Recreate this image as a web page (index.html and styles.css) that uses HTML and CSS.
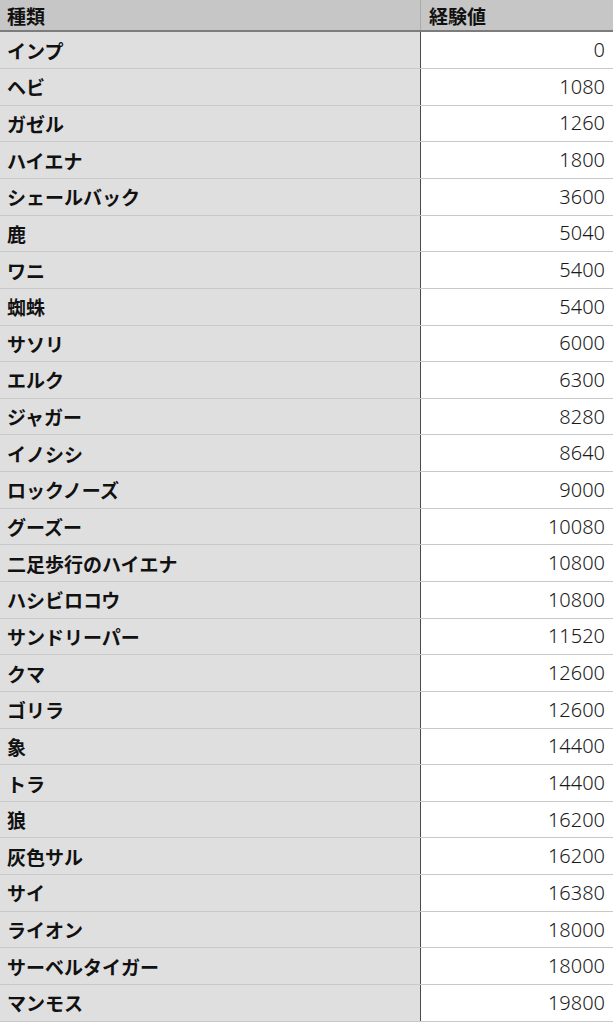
FILE: index.html
```html
<!DOCTYPE html>
<html lang="ja">
<head>
<meta charset="utf-8">
<link rel="stylesheet" href="styles.css">
</head>
<body>
<div class="table">
  <div class="row head"><div class="name">種類</div><div class="val">経験値</div></div>
  <div class="row"><div class="name">インプ</div><div class="val">0</div></div>
  <div class="row"><div class="name">ヘビ</div><div class="val">1080</div></div>
  <div class="row"><div class="name">ガゼル</div><div class="val">1260</div></div>
  <div class="row"><div class="name">ハイエナ</div><div class="val">1800</div></div>
  <div class="row"><div class="name">シェールバック</div><div class="val">3600</div></div>
  <div class="row"><div class="name">鹿</div><div class="val">5040</div></div>
  <div class="row"><div class="name">ワニ</div><div class="val">5400</div></div>
  <div class="row"><div class="name">蜘蛛</div><div class="val">5400</div></div>
  <div class="row"><div class="name">サソリ</div><div class="val">6000</div></div>
  <div class="row"><div class="name">エルク</div><div class="val">6300</div></div>
  <div class="row"><div class="name">ジャガー</div><div class="val">8280</div></div>
  <div class="row"><div class="name">イノシシ</div><div class="val">8640</div></div>
  <div class="row"><div class="name">ロックノーズ</div><div class="val">9000</div></div>
  <div class="row"><div class="name">グーズー</div><div class="val">10080</div></div>
  <div class="row"><div class="name">二足歩行のハイエナ</div><div class="val">10800</div></div>
  <div class="row"><div class="name">ハシビロコウ</div><div class="val">10800</div></div>
  <div class="row"><div class="name">サンドリーパー</div><div class="val">11520</div></div>
  <div class="row"><div class="name">クマ</div><div class="val">12600</div></div>
  <div class="row"><div class="name">ゴリラ</div><div class="val">12600</div></div>
  <div class="row"><div class="name">象</div><div class="val">14400</div></div>
  <div class="row"><div class="name">トラ</div><div class="val">14400</div></div>
  <div class="row"><div class="name">狼</div><div class="val">16200</div></div>
  <div class="row"><div class="name">灰色サル</div><div class="val">16200</div></div>
  <div class="row"><div class="name">サイ</div><div class="val">16380</div></div>
  <div class="row"><div class="name">ライオン</div><div class="val">18000</div></div>
  <div class="row"><div class="name">サーベルタイガー</div><div class="val">18000</div></div>
  <div class="row"><div class="name">マンモス</div><div class="val">19800</div></div>
</div>
</body>
</html>
```

FILE: styles.css
```css
html, body {
  margin: 0;
  padding: 0;
  background: #ffffff;
}
body {
  font-family: "Noto Sans CJK JP", "Noto Sans", sans-serif;
  color: #111111;
  font-size: 19px;
}
.table {
  display: flex;
  flex-direction: column;
  width: 613px;
}
.row {
  display: grid;
  grid-template-columns: 420px 1fr;
  height: 36.65px;
  box-sizing: border-box;
  border-bottom: 1px solid #c9c9c9;
}
.row.head {
  height: 32.4px;
  background: #c5c6c5;
  border-bottom: 2px solid #7c7c7c;
}
.name {
  background: #dfdfdf;
  padding-left: 7px;
  font-weight: 700;
  display: flex;
  align-items: center;
  line-height: 1;
}
.val {
  background: #ffffff;
  border-left: 1px solid #4a4a4a;
  padding-right: 8px;
  display: flex;
  align-items: center;
  justify-content: flex-end;
  font-family: "Noto Sans", "Noto Sans CJK JP", sans-serif;
  font-size: 20px;
  font-weight: 300;
  color: #1a1a1a;
  line-height: 1;
}
.head .name {
  background: #c5c6c5;
}
.head .val {
  background: #c5c6c5;
  border-left: 1px solid #a9aaa9;
  justify-content: flex-start;
  padding-left: 8px;
  font-family: "Noto Sans CJK JP", "Noto Sans", sans-serif;
  font-size: 19px;
  font-weight: 700;
  color: #111111;
}
```
